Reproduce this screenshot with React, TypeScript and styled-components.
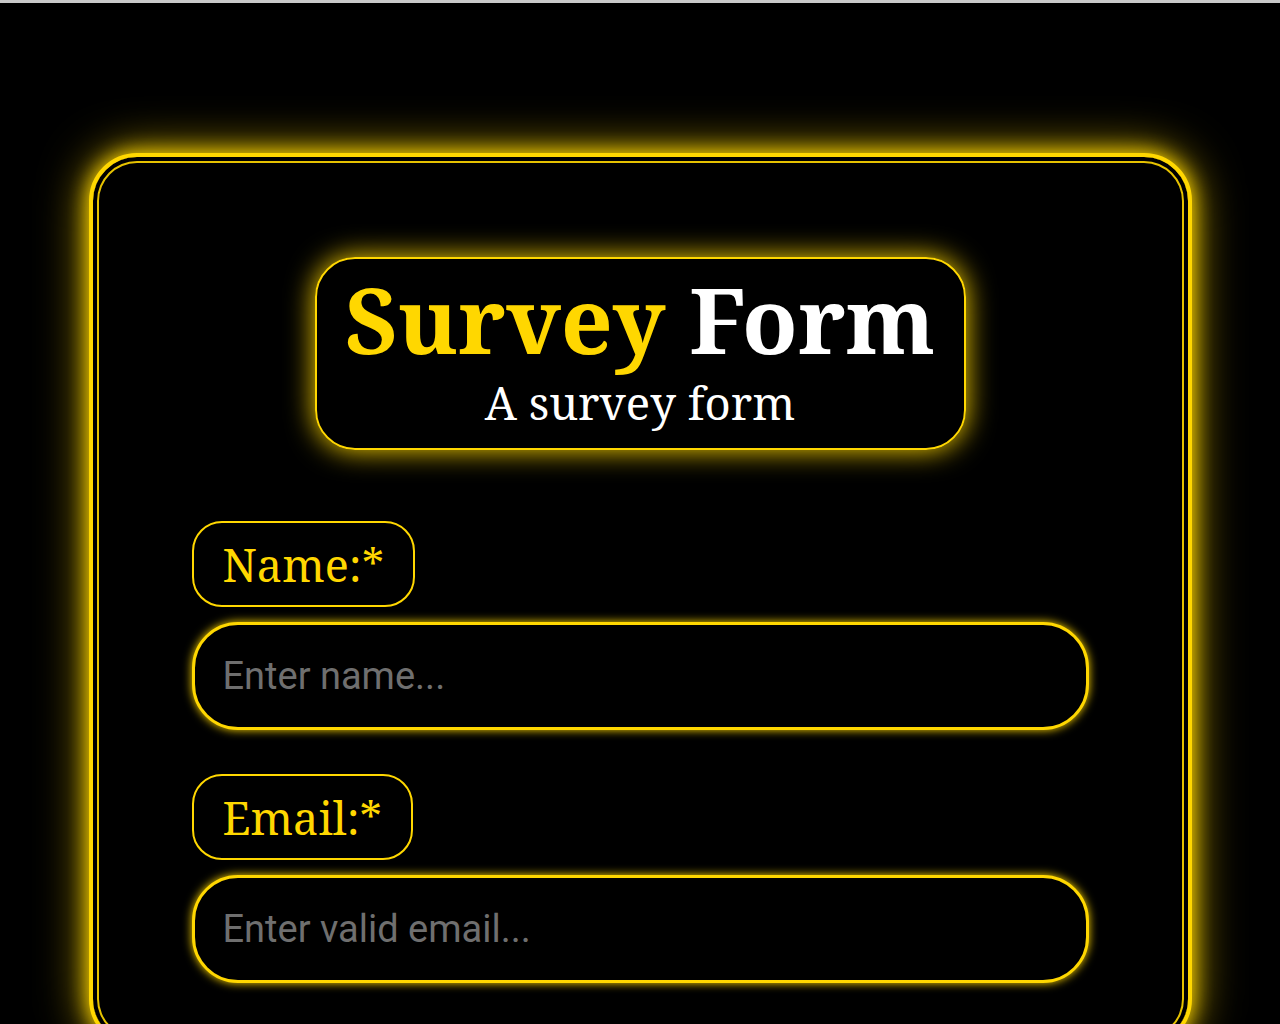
import React from "react";
import styled, { createGlobalStyle } from "styled-components";

const GOLD = "#ffd700";

const GlobalStyle = createGlobalStyle`
  html, body {
    margin: 0;
    padding: 0;
    background: #000;
  }
  body {
    border-top: 3px solid #c9c9c9;
    font-family: "Noto Serif", "DejaVu Serif", serif;
  }
`;

const Page = styled.main`
  padding: 150px 0 80px;
  display: flex;
  justify-content: center;
`;

const Card = styled.section`
  box-sizing: border-box;
  width: 1103px;
  border: 4px solid ${GOLD};
  border-radius: 48px;
  padding: 100px 99px 60px;
  background: #000;
  box-shadow: 0 0 20px ${GOLD}, 0 0 48px rgba(255, 215, 0, 0.8),
    inset 0 0 0 4px #000, inset 0 0 0 6px #e6c200;
  display: flex;
  flex-direction: column;
  align-items: center;
`;

const Header = styled.header`
  box-sizing: border-box;
  width: 651px;
  height: 193px;
  border: 2px solid ${GOLD};
  border-radius: 40px;
  box-shadow: 0 0 28px ${GOLD};
  text-align: center;
  padding-top: 15px;
`;

const Title = styled.h1`
  margin: 0;
  font-size: 91px;
  font-weight: 700;
  line-height: 1;
  color: #fff;
`;

const Accent = styled.span`
  color: ${GOLD};
`;

const Subtitle = styled.p`
  margin: 10px 0 0;
  font-size: 45.5px;
  line-height: 1.2;
  color: #fff;
`;

const Form = styled.form`
  align-self: stretch;
  margin-top: 71px;
  display: flex;
  flex-direction: column;
  gap: 44px;
`;

const Field = styled.div`
  display: flex;
  flex-direction: column;
  align-items: flex-start;
  gap: 15px;
`;

const Label = styled.label`
  box-sizing: border-box;
  height: 86px;
  display: flex;
  align-items: center;
  padding: 0 29px;
  border: 2px solid ${GOLD};
  border-radius: 30px;
  font-size: 45px;
  color: ${GOLD};
`;

const Input = styled.input`
  box-sizing: border-box;
  width: 100%;
  height: 108px;
  padding: 0 28px;
  border: 3px solid ${GOLD};
  border-radius: 46px;
  background: #000;
  box-shadow: 0 0 10px ${GOLD};
  color: #fff;
  font-family: Roboto, "Noto Sans", sans-serif;
  font-size: 38px;
  outline: none;
  &::placeholder {
    color: #6f6f6f;
  }
`;

export default function App() {
  return (
    <>
      <GlobalStyle />
      <Page>
        <Card>
          <Header>
            <Title>
              <Accent>Survey</Accent> Form
            </Title>
            <Subtitle>A survey form</Subtitle>
          </Header>
          <Form onSubmit={(e) => e.preventDefault()}>
            <Field>
              <Label htmlFor="name">Name:*</Label>
              <Input id="name" type="text" placeholder="Enter name..." />
            </Field>
            <Field>
              <Label htmlFor="email">Email:*</Label>
              <Input id="email" type="email" placeholder="Enter valid email..." />
            </Field>
          </Form>
        </Card>
      </Page>
    </>
  );
}
